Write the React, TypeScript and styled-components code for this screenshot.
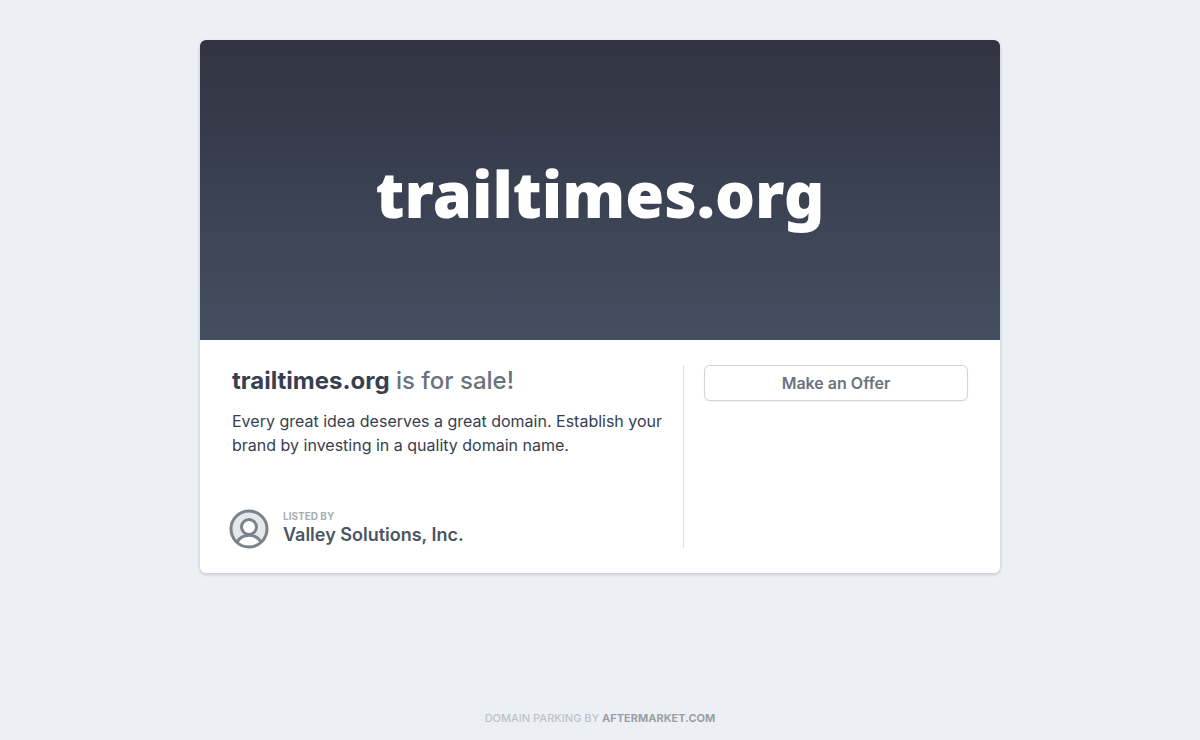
import React from "react";
import styled, { createGlobalStyle } from "styled-components";

const GlobalStyle = createGlobalStyle`
  *, *::before, *::after { box-sizing: border-box; }
  body {
    margin: 0;
    background: #ecf0f5;
    color: #374050;
    font-family: Inter, "Liberation Sans", sans-serif;
    font-size: 16px;
    line-height: 24px;
  }
`;

const Page = styled.div`
  min-height: 100vh;
  display: flex;
  flex-direction: column;
  align-items: center;
  justify-content: space-between;
  gap: 40px;
  padding: 40px 16px 12px;
`;

const Card = styled.main`
  width: 100%;
  max-width: 800px;
  overflow: hidden;
  border-radius: 6px;
  background: #ffffff;
  box-shadow: 0 1px 3px rgba(0, 0, 0, 0.12), 0 2px 4px rgba(0, 0, 0, 0.08);
`;

const Banner = styled.header`
  display: flex;
  align-items: center;
  justify-content: center;
  min-height: 300px;
  padding: 32px 24px 24px;
  background: linear-gradient(#313342, #434f61);
`;

const Wordmark = styled.h1`
  margin: 0;
  color: #ffffff;
  font-family: "Noto Sans", sans-serif;
  font-size: 63px;
  font-weight: 900;
  line-height: 72px;
`;

const Details = styled.div`
  display: grid;
  grid-template-columns: minmax(0, 1fr) 285px;
  padding: 25px 32px;
  @media (max-width: 700px) {
    grid-template-columns: 1fr;
    gap: 24px;
  }
`;

const Summary = styled.section`
  display: flex;
  flex-direction: column;
  min-height: 183px;
  padding-right: 20px;
`;

const Headline = styled.h2`
  margin: 0 0 12px;
  color: #6b737e;
  font-size: 24px;
  font-weight: 500;
  line-height: 32px;
  strong {
    color: #374050;
    font-weight: 700;
  }
`;

const Pitch = styled.p`
  margin: 0;
`;

const Seller = styled.div`
  display: flex;
  align-items: center;
  gap: 14px;
  margin: auto 0 -1px -3px;
`;

const Avatar = styled.svg`
  flex: none;
  width: 40px;
  height: 40px;
`;

const SellerLabel = styled.div`
  color: #a9adb4;
  font-size: 10px;
  font-weight: 700;
  line-height: 11px;
`;

const SellerName = styled.div`
  color: #4b5563;
  font-size: 18px;
  font-weight: 600;
  line-height: 25px;
`;

const Actions = styled.section`
  padding-left: 20px;
  border-left: 1px solid #dddfe3;
`;

const OfferButton = styled.button`
  width: 100%;
  height: 36px;
  border: 1px solid #d1d3d6;
  border-radius: 6px;
  background: #ffffff;
  color: #6b737e;
  font: inherit;
  font-weight: 600;
  cursor: pointer;
  box-shadow: 0 1px 2px rgba(0, 0, 0, 0.05);
`;

const Footer = styled.footer`
  color: #bcc1c7;
  font-size: 11px;
  font-weight: 500;
  line-height: 20px;
`;

const FooterLink = styled.a`
  color: #9aa0a6;
  font-weight: 700;
  text-decoration: none;
`;

export default function App() {
  return (
    <>
      <GlobalStyle />
      <Page>
        <Card>
          <Banner>
            <Wordmark>trailtimes.org</Wordmark>
          </Banner>
          <Details>
            <Summary>
              <Headline>
                <strong>trailtimes.org</strong> is for sale!
              </Headline>
              <Pitch>
                Every great idea deserves a great domain. Establish your brand by
                investing in a quality domain name.
              </Pitch>
              <Seller>
                <Avatar viewBox="0 0 40 40" fill="none" aria-hidden="true">
                  <circle cx="20" cy="20" r="18" fill="#e5e8ea" />
                  <path d="M8 33a14 14 0 0 1 24 0A18 18 0 0 1 8 33Z" fill="#fff" />
                  <circle cx="20" cy="18" r="7.5" fill="#fff" />
                  <g stroke="#7c828a" strokeWidth="3">
                    <circle cx="20" cy="20" r="18" />
                    <circle cx="20" cy="18" r="7.5" />
                    <path d="M8 33a14 14 0 0 1 24 0" />
                  </g>
                </Avatar>
                <div>
                  <SellerLabel>LISTED BY</SellerLabel>
                  <SellerName>Valley Solutions, Inc.</SellerName>
                </div>
              </Seller>
            </Summary>
            <Actions>
              <OfferButton type="button">Make an Offer</OfferButton>
            </Actions>
          </Details>
        </Card>
        <Footer>
          DOMAIN PARKING BY <FooterLink href="#">AFTERMARKET.COM</FooterLink>
        </Footer>
      </Page>
    </>
  );
}
